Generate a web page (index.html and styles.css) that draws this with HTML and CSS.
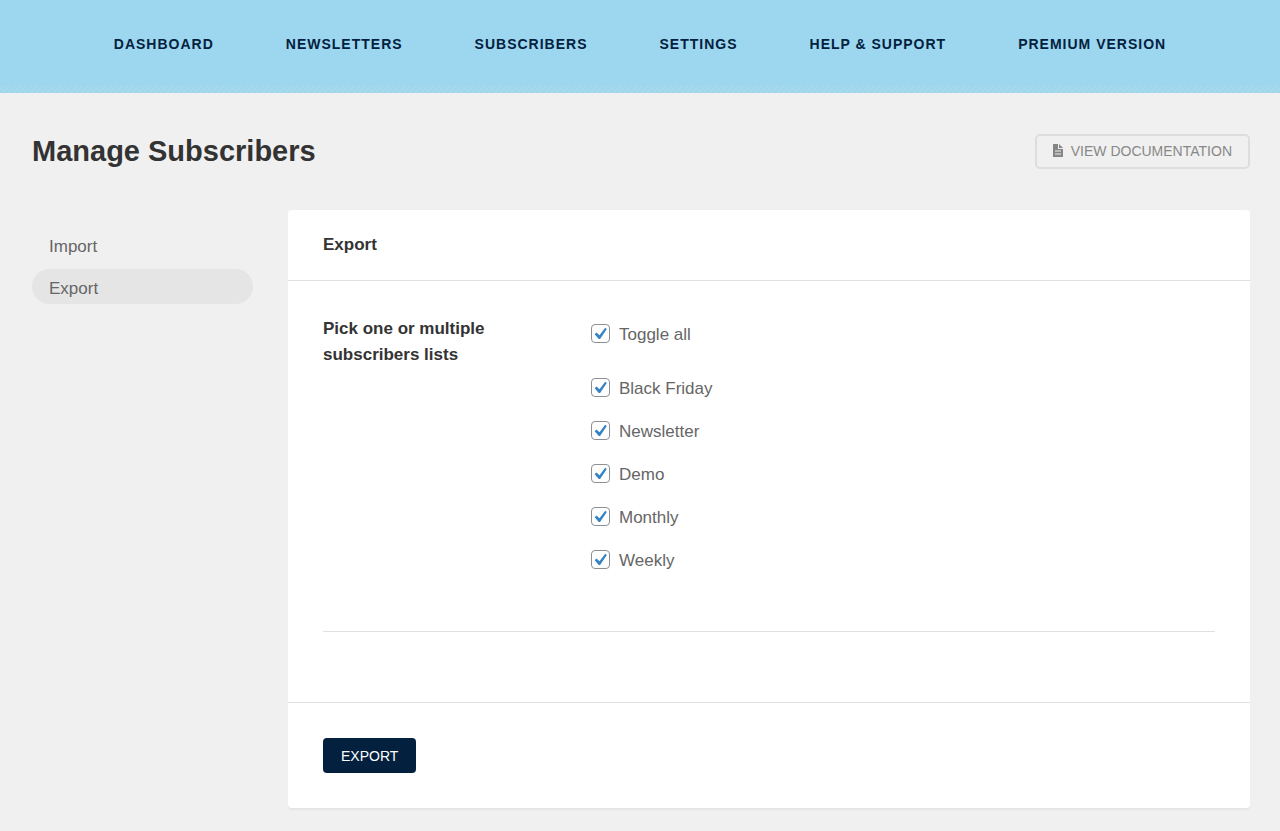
FILE: index.html
```html
<!DOCTYPE html>
<html lang="en">
<head>
<meta charset="utf-8">
<title>Manage Subscribers</title>
<link rel="stylesheet" href="styles.css">
</head>
<body>
<nav class="topbar">
<a href="#">Dashboard</a>
<a href="#">Newsletters</a>
<a href="#">Subscribers</a>
<a href="#">Settings</a>
<a href="#">Help &amp; Support</a>
<a href="#">Premium Version</a>
</nav>
<main class="page">
<header class="page-head">
<h1>Manage Subscribers</h1>
<a class="doc-link" href="#"><svg width="10" height="13" viewBox="0 0 10 13" aria-hidden="true"><path fill="#858585" fill-rule="evenodd" d="M0 0h5v5h5v8H0zM6 0l4 4H6zM2 6.500v1h6v-1zM2 9.500v1h6v-1z"/></svg><span>View documentation</span></a>
</header>
<div class="columns">
<aside class="side">
<a href="#">Import</a>
<a href="#" class="current" aria-current="page">Export</a>
</aside>
<form class="card">
<h2 class="card-title">Export</h2>
<div class="card-body">
<div class="field" role="group" aria-labelledby="lists-label">
<h3 class="field-label" id="lists-label">Pick one or multiple subscribers lists</h3>
<div class="options">
<label class="toggle-all"><input type="checkbox" checked>Toggle all</label>
<label><input type="checkbox" checked>Black Friday</label>
<label><input type="checkbox" checked>Newsletter</label>
<label><input type="checkbox" checked>Demo</label>
<label><input type="checkbox" checked>Monthly</label>
<label><input type="checkbox" checked>Weekly</label>
</div>
</div>
</div>
<footer class="card-foot"><button type="button">Export</button></footer>
</form>
</div>
</main>
</body>
</html>
```
FILE: styles.css
```css
* { box-sizing: border-box; }
body { margin: 0; background: #f0f0f0; color: #666; font: 17px/26px "Liberation Sans", Arial, sans-serif; }
a { color: inherit; text-decoration: none; }
h1, h2, h3 { margin: 0; color: #333; }
.topbar { display: flex; justify-content: center; align-items: center; gap: 72px; height: 93px; padding-bottom: 5px; background: repeating-linear-gradient(135deg, #9cd7ef 0 2px, #a8d9e8 2px 4px) bottom / 100% 8px no-repeat #9cd7ef; color: #03203e; font-size: 14px; font-weight: 700; letter-spacing: 1px; text-transform: uppercase; }
.page { padding: 41px 30px 22px 32px; }
.page-head { display: flex; justify-content: space-between; align-items: center; height: 35px; }
h1 { font-size: 29px; line-height: 35px; }
.doc-link { display: flex; align-items: center; gap: 8px; height: 35px; padding: 0 16px 2px; border: 2px solid #ddd; border-radius: 5px; color: #888; font-size: 14px; text-transform: uppercase; }
.columns { display: grid; grid-template-columns: 221px 1fr; gap: 35px; margin-top: 41px; }
.side { display: flex; flex-direction: column; gap: 7px; padding-top: 17px; }
.side a { height: 35px; padding: 2px 17px 0; border-radius: 18px; line-height: 35px; }
.side .current { background: #e5e5e5; }
.card { background: #fff; border-radius: 4px; box-shadow: 0 2px 1px #e5e5e5; }
.card-title { padding: 22px 35px; border-bottom: 1px solid #e0e0e0; font-size: 17px; line-height: 26px; }
.card-body { padding: 35px 35px 70px; }
.field { display: grid; grid-template-columns: 268px 1fr; padding-bottom: 57px; border-bottom: 1px solid #e0e0e0; }
.field-label { width: 180px; font-size: 17px; line-height: 26px; }
.options { display: flex; flex-direction: column; align-items: flex-start; gap: 17px; padding-top: 6px; }
.options label { display: flex; align-items: flex-start; gap: 9px; }
.options .toggle-all { margin-bottom: 11px; }
.options input { appearance: none; width: 19px; height: 19px; margin: 2px 0 0; border: 1px solid #8c8f94; border-radius: 4px; background: #fff; }
.options input:checked { background: #fff url("data:image/svg+xml,%3Csvg xmlns='http://www.w3.org/2000/svg' viewBox='0 0 17 17'%3E%3Cpath fill='%233582c4' d='M13.200 2.800l1.600 1.100-6.700 10.200H6.700L2.700 9.200l1.800-1.700 3 2.700z'/%3E%3C/svg%3E") center / 17px no-repeat; }
.card-foot { padding: 35px; border-top: 1px solid #e0e0e0; }
.card-foot button { display: block; height: 35px; padding: 0 18px; border: 0; border-radius: 4px; background: #03203e; color: #fff; font: 14px "Liberation Sans", Arial, sans-serif; text-transform: uppercase; }
```
